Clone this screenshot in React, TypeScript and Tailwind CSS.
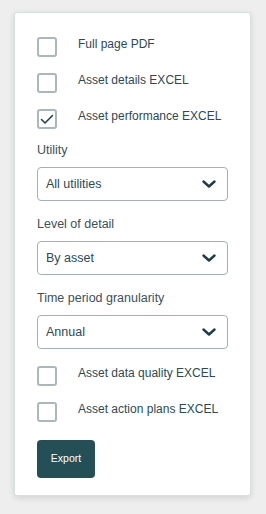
import { useState } from "react";

type Option = { label: string; checked?: boolean };

function CheckRow({ label, checked }: Option) {
  const [on, setOn] = useState(!!checked);
  return (
    <label className="flex items-start gap-[21px] cursor-pointer" onClick={() => setOn(!on)}>
      <span className="w-5 h-5 shrink-0 rounded-[3px] border-2 border-[#aab8ba] bg-white flex items-center justify-center">
        {on && (
          <svg width="14" height="14" viewBox="0 0 14 14" fill="none">
            <path d="M1.5 7.5 L5 11 L12.5 3.5" stroke="#24424c" strokeWidth="1.6" strokeLinecap="round" strokeLinejoin="round" />
          </svg>
        )}
      </span>
      <span className="text-[12px] leading-[14px] text-[#2c4a53] whitespace-nowrap">{label}</span>
    </label>
  );
}

function SelectField({ label, value }: { label: string; value: string }) {
  return (
    <div className="flex flex-col gap-[9px]">
      <span className="text-[12.5px] leading-4 text-[#3b5157]">{label}</span>
      <div className="h-[34px] rounded-[4px] border border-[#a3b1b4] bg-white flex items-center justify-between pl-2 pr-[11px]">
        <span className="text-[12.5px] text-[#2c4a53]">{value}</span>
        <svg width="14" height="8" viewBox="0 0 14 8" fill="none">
          <path d="M1.5 1.5 L7 6.5 L12.5 1.5" stroke="#1f3d47" strokeWidth="2.4" strokeLinecap="round" strokeLinejoin="round" />
        </svg>
      </div>
    </div>
  );
}

export default function App() {
  return (
    <div className="min-h-[514px] w-[266px] bg-[#eeeeee] pt-3 pl-[14px] font-['Liberation_Sans',Arial,sans-serif]">
      <div className="w-[237px] bg-white border border-[#d6e0df] rounded-[3px] shadow-[0_2px_6px_rgba(0,0,0,0.12)] pt-[24px] pb-[17px] px-[22px] flex flex-col">
        {/* export file types */}
        <div className="flex flex-col gap-4">
          <CheckRow label="Full page PDF" />
          <CheckRow label="Asset details EXCEL" />
          <CheckRow label="Asset performance EXCEL" checked />
        </div>

        <div className="flex flex-col gap-[15px] mt-[13px]">
          <SelectField label="Utility" value="All utilities" />
          <SelectField label="Level of detail" value="By asset" />
          <SelectField label="Time period granularity" value="Annual" />
        </div>

        <div className="flex flex-col gap-4 mt-[17px]">
          <CheckRow label="Asset data quality EXCEL" />
          <CheckRow label="Asset action plans EXCEL" />
        </div>

        <button className="mt-[18px] w-[58px] h-[38px] rounded-[4px] bg-[#244f57] text-white text-[10.5px]">
          Export
        </button>
      </div>
    </div>
  );
}
